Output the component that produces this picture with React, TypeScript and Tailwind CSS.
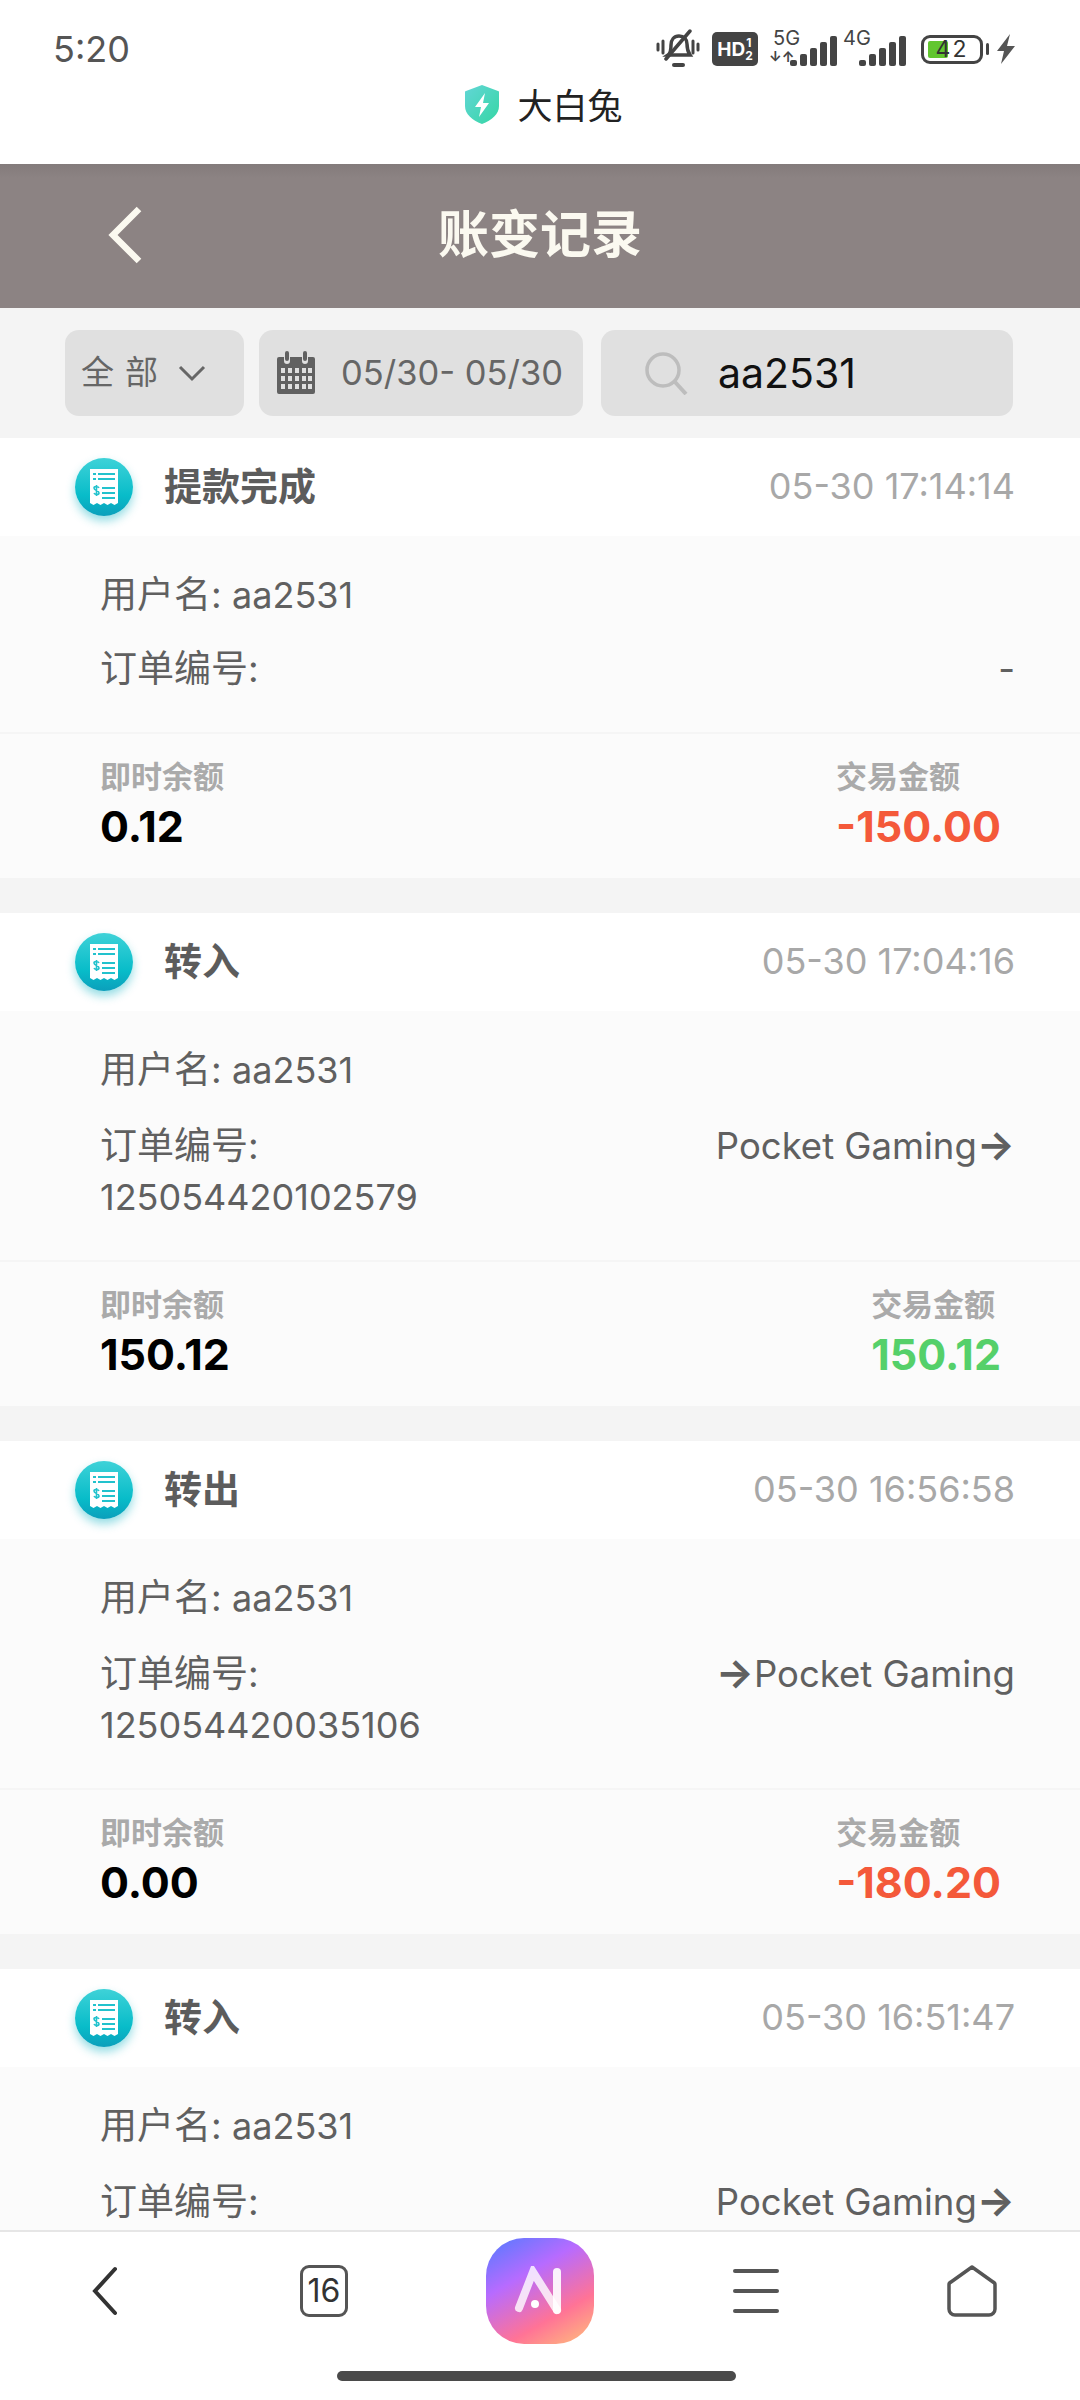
import React from "react";

const FONT = "font-['Inter','Noto_Sans_CJK_SC',sans-serif]";

interface Rec {
  title: string;
  time: string;
  order?: string;
  channel: string;
  balance: string;
  label: string;
  amount: string;
  green?: boolean;
}

const records: Rec[] = [
  { title: "提款完成", time: "05-30 17:14:14", channel: "-", balance: "0.12", label: "交易金额", amount: "-150.00" },
  { title: "转入", time: "05-30 17:04:16", order: "125054420102579", channel: "Pocket Gaming→", balance: "150.12", label: "交易金额", amount: "150.12", green: true },
  { title: "转出", time: "05-30 16:56:58", order: "125054420035106", channel: "→Pocket Gaming", balance: "0.00", label: "交易金额", amount: "-180.20" },
  { title: "转入", time: "05-30 16:51:47", channel: "Pocket Gaming→", balance: "180.20", label: "交易金额", amount: "180.20", green: true },
];

const Bars = () => (
  <svg width="47" height="30" viewBox="0 0 47 30" fill="#444">
    {[0, 1, 2, 3, 4].map((i) => (
      <rect key={i} x={i * 10} y={24 - i * 6} width="7" height={6 + i * 6} rx="2" />
    ))}
  </svg>
);

const StatusBar = () => (
  <div className="h-[78px] pt-[20px] pl-[53px] pr-[64px] bg-white flex items-center justify-between">
    <span className="text-[36px] leading-none text-[#555]">5:20</span>
    <div className="flex items-center">
      <svg width="44" height="40" viewBox="0 0 44 40" fill="none" stroke="#444" strokeWidth="3.5" strokeLinecap="round">
        <path d="M12 26c3-2 3-6 3-10 0-5 3-9 8-9s8 3 8 8c0 5 1 8 3 11H12Z" />
        <path d="M10 30 34 2" />
        <path d="M18 36h9" strokeWidth="4" />
        <path d="M2 15v6M7 12v12M37 12v12M42 15v6" strokeWidth="3" />
      </svg>
      <div className="ml-[12px] w-[46px] h-[34px] rounded-[5px] bg-[#444] text-white flex items-center justify-center font-bold text-[19px] leading-none">
        HD<span className="text-[12px] leading-[13px] flex flex-col items-center"><span>1</span><span>2</span></span>
      </div>
      <div className="relative ml-[11px] w-[68px] h-[34px]">
        <span className="absolute left-[4px] top-[-3px] text-[20px] leading-[18px] text-[#444]">5G</span>
        <span className="absolute left-[0px] top-[18px] text-[14px] leading-[14px] font-bold text-[#444]">↓↑</span>
        <div className="absolute right-0 bottom-0"><Bars /></div>
      </div>
      <div className="relative ml-[5px] w-[64px] h-[34px]">
        <span className="absolute left-[1px] top-[-3px] text-[20px] leading-[18px] text-[#444]">4G</span>
        <div className="absolute right-0 bottom-0"><Bars /></div>
      </div>
      <div className="relative ml-[15px] w-[62px] h-[29px] border-[3px] border-[#444] rounded-[9px] flex items-center justify-center text-[23px] leading-none text-[#333]">
        <div className="absolute left-[4px] top-[3px] bottom-[3px] w-[20px] bg-[#62c62f] rounded-[2px]" />
        <span className="relative tracking-[2px]">42</span>
      </div>
      <div className="ml-[3px] w-[3px] h-[12px] bg-[#444] rounded-full" />
      <svg className="ml-[7px]" width="20" height="30" viewBox="0 0 20 30" fill="#555">
        <path d="M14 0 1 17h7l-3 13L19 12h-8l3-12Z" />
      </svg>
    </div>
  </div>
);

const TopBanner = () => (
  <div className="h-[86px] flex items-start justify-center pt-[8px] pl-[8px] bg-white gap-[18px]">
    <svg width="34" height="39" viewBox="0 0 34 39" className="mt-[-1px]">
      <defs>
        <linearGradient id="sh" x1="0" y1="0" x2="1" y2="1">
          <stop offset="0" stopColor="#62d6d6" />
          <stop offset="1" stopColor="#35d6a4" />
        </linearGradient>
      </defs>
      <path d="M17 0 33 6a1 1 0 0 1 1 1v14c0 8-7 14-17 18C7 35 0 29 0 21V7a1 1 0 0 1 1-1L17 0Z" fill="url(#sh)" />
      <path d="M20 8 10 22h6l-2 10 10-14h-6l2-10Z" fill="#fff" />
    </svg>
    <span className="text-[35px] leading-[40px] text-[#222]">大白兔</span>
  </div>
);

const Header = () => (
  <div className="relative h-[144px] pb-[4px] flex items-center justify-center bg-[linear-gradient(#837b7b,#8c8383_14px)]">
    <svg className="absolute left-[106px] top-[42px]" width="38" height="58" viewBox="0 0 38 58" fill="none" stroke="#fbf9f0" strokeWidth="6.5">
      <path d="M33 3 7 29l26 26" />
    </svg>
    <h1 className="text-[51px] leading-none font-bold text-[#fbf9f0]">账变记录</h1>
  </div>
);

const FilterBar = () => (
  <div className="h-[130px] bg-[#f4f4f4] pl-[65px] flex items-center">
    <div className="w-[179px] h-[86px] rounded-[14px] bg-[#e0e0e0] flex items-center pl-[16px] text-[33px] text-[#666]">
      <span className="tracking-[11px]">全部</span>
      <svg className="ml-[9px]" width="28" height="18" viewBox="0 0 28 18" fill="none" stroke="#666" strokeWidth="3">
        <path d="m2 3 12 12L26 3" />
      </svg>
    </div>
    <div className="ml-[15px] w-[324px] h-[86px] rounded-[14px] bg-[#e0e0e0] flex items-center pl-[17px] text-[34.5px] text-[#666]">
      <svg width="40" height="44" viewBox="0 0 40 44" fill="#616161">
        <path d="M3 6h5v4a3 3 0 0 0 6 0V6h12v4a3 3 0 0 0 6 0V6h5a2 2 0 0 1 2 2v33a2 2 0 0 1-2 2H3a2 2 0 0 1-2-2V8a2 2 0 0 1 2-2Z" />
        <rect x="9" y="0" width="4" height="10" rx="2" />
        <rect x="27" y="0" width="4" height="10" rx="2" />
        <g fill="#e0e0e0">
          {[17, 25, 33].map((y) =>
            [5, 12, 19, 26, 32].map((x) => <rect key={`${x}-${y}`} x={x} y={y} width="4" height="5" />)
          )}
        </g>
      </svg>
      <span className="ml-[25px] whitespace-nowrap">05/30- 05/30</span>
    </div>
    <div className="ml-[18px] w-[412px] h-[86px] rounded-[14px] bg-[#e0e0e0] flex items-center pl-[43px]">
      <svg width="44" height="44" viewBox="0 0 44 44" fill="none" stroke="#bdbdbd" strokeWidth="3.5">
        <circle cx="19" cy="19" r="16" />
        <path d="m31 31 11 12" strokeWidth="4" />
      </svg>
      <span className="ml-[30px] text-[41px] leading-none text-[#111]">aa2531</span>
    </div>
  </div>
);

const ReceiptIcon = () => (
  <div className="w-[58px] h-[58px] rounded-full bg-[linear-gradient(#3ed2d8,#08bcc9_65%,#0b9fbb)] shadow-[0_5px_10px_rgba(20,180,195,0.45)] flex items-center justify-center">
    <svg width="28" height="36" viewBox="0 0 28 36">
      <path d="M0 0h28v34l-3.5 2-3.5-2-3.5 2-3.5-2-3.5 2L7 34l-3.5 2L0 34V0Z" fill="#fff" />
      <g fill="#22c2cd">
        <rect x="3" y="4" width="3" height="2" />
        <rect x="8" y="4" width="17" height="2" />
        <rect x="3" y="9" width="3" height="2" />
        <rect x="8" y="9" width="17" height="2" />
        <rect x="12" y="18" width="13" height="2" />
        <rect x="12" y="23" width="13" height="2" />
        <rect x="12" y="28" width="13" height="2" />
      </g>
      <path d="M9 19c-1-2-5-2-5 0 0 3 5 2 5 5 0 2-4 2-5 0M6.500 16v11" fill="none" stroke="#22c2cd" strokeWidth="1.6" />
    </svg>
  </div>
);

// arrow in the channel text is heavier and longer than the regular glyph
const Channel = ({ text }: { text: string }) => (
  <div className="text-[36.5px]">
    {text.split("→").map((part, i) => (
      <React.Fragment key={i}>
        {i > 0 && <span className="text-[40px] leading-none font-bold">→</span>}
        {part}
      </React.Fragment>
    ))}
  </div>
);

const RecordCard = ({ r }: { r: Rec }) => {
  const tall = r.channel !== "-";
  return (
    <section className="mb-[35px] bg-[#fbfbfb]">
      <div className="h-[98px] bg-white pl-[75px] pr-[65px] flex items-center justify-between">
        <div className="flex items-center gap-[31px]">
          <ReceiptIcon />
          <span className="text-[38px] leading-none pb-[2px] font-bold text-[#5c5c5c]">{r.title}</span>
        </div>
        <span className="text-[36px] leading-none pb-[2px] text-[#a8a8a8]">{r.time}</span>
      </div>
      <div className="pl-[100px] pr-[65px] pt-[34px] pb-[38px] text-[37px] leading-[50px] text-[#606060]">
        <div>
          用户名: <span className="text-[36px]">aa2531</span>
        </div>
        <div className={`flex justify-between ${tall ? "mt-[26px]" : "mt-[24px]"}`}>
          <div>
            <div>订单编号:</div>
            {r.order && <div className="mt-[1px] text-[36px]">{r.order}</div>}
          </div>
          <Channel text={r.channel} />
        </div>
      </div>
      <div className="h-[146px] border-t-2 border-[#f5f5f5] pl-[100px] pr-[79px] pt-[25px] flex justify-between">
        <div>
          <div className="text-[31px] leading-[36px] font-bold text-[#aaa]">即时余额</div>
          <div className="mt-[5px] text-[43px] leading-[52px] font-bold text-black">{r.balance}</div>
        </div>
        <div className="flex flex-col items-start">
          <div className="text-[31px] leading-[36px] font-bold text-[#aaa]">{r.label}</div>
          <div className={`mt-[5px] text-[43px] leading-[52px] font-bold ${r.green ? "text-[#55d06a]" : "text-[#f4593a]"}`}>{r.amount}</div>
        </div>
      </div>
    </section>
  );
};

const BottomNav = () => (
  <div className="h-[170px] bg-white border-t-2 border-[#e6e6e6]">
    <div className="grid grid-cols-5 h-[118px] items-center">
      <div className="flex justify-center">
        <svg width="28" height="50" viewBox="0 0 28 50" fill="none" stroke="#333" strokeWidth="4" strokeLinecap="round" className="mr-[6px]">
          <path d="M24 3 4 25l20 22" />
        </svg>
      </div>
      <div className="flex justify-center">
        <div className="w-[48px] h-[52px] rounded-[9px] border-[3px] border-[#555] flex items-center justify-center text-[32px] leading-none text-[#333]">16</div>
      </div>
      <div className="flex justify-center">
        <div className="w-[108px] h-[106px] rounded-[38px] bg-[linear-gradient(150deg,#5f79ff_5%,#b76bff_35%,#ff7396_70%,#ffc27a)] flex items-center justify-center">
          <svg width="54" height="50" viewBox="0 0 54 50" fill="none" strokeLinecap="round" strokeWidth="8">
            <path d="M6 42 20 6l24 38" stroke="#fff" strokeOpacity="0.8" />
            <path d="M44 6v38" stroke="#fff" strokeOpacity="0.9" />
            <circle cx="22" cy="38" r="4" fill="#fff" stroke="none" />
          </svg>
        </div>
      </div>
      <div className="flex justify-center">
        <div className="w-[46px] flex flex-col gap-[16px]">
          <div className="h-[4px] bg-[#555] rounded-full" />
          <div className="h-[4px] bg-[#555] rounded-full" />
          <div className="h-[4px] bg-[#555] rounded-full" />
        </div>
      </div>
      <div className="flex justify-center">
        <svg width="50" height="52" viewBox="0 0 50 52" fill="none" stroke="#555" strokeWidth="3.500" strokeLinejoin="round">
          <path d="M25 2 46 17a3 3 0 0 1 2 3v24a6 6 0 0 1-6 6H8a6 6 0 0 1-6-6V20a3 3 0 0 1 2-3L25 2Z" />
        </svg>
      </div>
    </div>
    <div className="mt-[21px] ml-[337px] w-[399px] h-[10px] rounded-full bg-[#4a4a4a]" />
  </div>
);

export default function App() {
  return (
    <div className={`${FONT} w-[1080px] h-[2400px] flex flex-col overflow-hidden bg-[#f4f4f4]`}>
      <StatusBar />
      <TopBanner />
      <Header />
      <FilterBar />
      <div className="flex-1 overflow-hidden">
        {records.map((r) => (
          <RecordCard key={r.time} r={r} />
        ))}
      </div>
      <BottomNav />
    </div>
  );
}
